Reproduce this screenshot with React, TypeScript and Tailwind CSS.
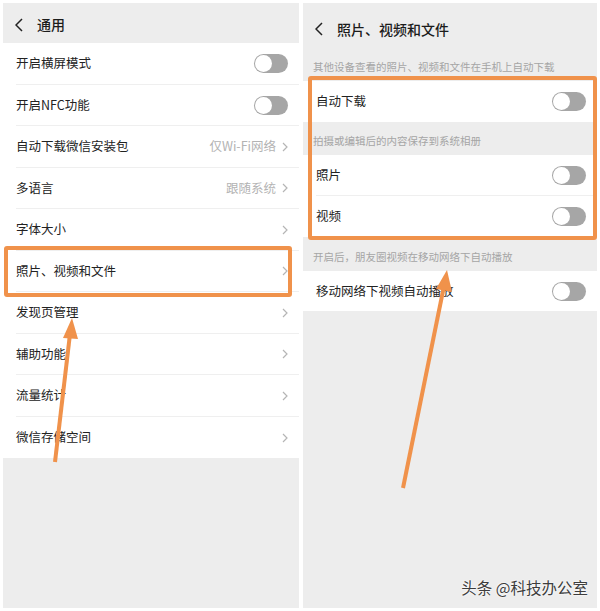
import React from "react"

const FONT = "font-['Noto_Sans_CJK_SC','Noto_Sans',sans-serif]"

type Row = {
  label: string
  toggle?: boolean
  value?: string
  arrow?: boolean
}

const generalRows: Row[] = [
  { label: "开启横屏模式", toggle: true },
  { label: "开启NFC功能", toggle: true },
  { label: "自动下载微信安装包", value: "仅Wi-Fi网络", arrow: true },
  { label: "多语言", value: "跟随系统", arrow: true },
  { label: "字体大小", arrow: true },
  { label: "照片、视频和文件", arrow: true },
  { label: "发现页管理", arrow: true },
  { label: "辅助功能", arrow: true },
  { label: "流量统计", arrow: true },
  { label: "微信存储空间", arrow: true },
]

function Toggle() {
  return (
    <div className="w-[34px] h-[19px] rounded-full bg-[#a6a6a6] p-[1px] flex items-center">
      <div className="w-[17px] h-[17px] rounded-full bg-white" />
    </div>
  )
}

function Chevron() {
  return (
    <svg width="6" height="10" viewBox="0 0 6 10" className="ml-[6px]">
      <polyline points="1,1 5,5 1,9" fill="none" stroke="#b5b5b5" strokeWidth="1.2" />
    </svg>
  )
}

function BackIcon() {
  return (
    <svg width="8" height="14" viewBox="0 0 8 14">
      <polyline points="7,1 1,7 7,13" fill="none" stroke="#222" strokeWidth="1.5" />
    </svg>
  )
}

function SettingRow({ row, last, height }: { row: Row; last?: boolean; height: string }) {
  return (
    <div className={`bg-white pl-[13px] ${height}`}>
      <div
        className={`h-full flex items-center pr-[11px] ${last ? "" : "border-b border-[#efefef]"}`}
      >
        <span className="flex-1 text-[12.5px] text-[#222]">{row.label}</span>
        {row.value && <span className="text-[12.5px] text-[#b3b3b3]">{row.value}</span>}
        {row.arrow && <Chevron />}
        {row.toggle && <Toggle />}
      </div>
    </div>
  )
}

function SectionLabel({ text, height }: { text: string; height: string }) {
  return (
    <div className={`${height} flex items-end pl-[10px] pb-[6px]`}>
      <span className="text-[10.5px] text-[#a5a5a5]">{text}</span>
    </div>
  )
}

export default function App() {
  return (
    <div className={`relative w-[600px] h-[611px] bg-white flex gap-[4px] pl-[3px] pt-[3px] ${FONT}`}>
      {/* left phone: 通用 */}
      <div className="w-[296px] h-[605px] bg-[#ededed] flex flex-col">
        <div className="h-[40px] flex items-center pl-[12px] pt-[3px] gap-[14px]">
          <BackIcon />
          <span className="text-[14px] font-medium text-[#1c1c1c]">通用</span>
        </div>
        <div className="flex flex-col">
          {generalRows.map((row, i) => (
            <SettingRow
              key={row.label}
              row={row}
              last={i === generalRows.length - 1}
              height={i % 2 === 0 ? "h-[42px]" : "h-[41px]"}
            />
          ))}
        </div>
      </div>

      {/* right phone: 照片、视频和文件 */}
      <div className="w-[294px] h-[605px] bg-[#ededed] flex flex-col">
        <div className="h-[52px] flex items-center pl-[12px] gap-[14px]">
          <BackIcon />
          <span className="text-[14px] font-medium text-[#1c1c1c]">照片、视频和文件</span>
        </div>
        <SectionLabel text="其他设备查看的照片、视频和文件在手机上自动下载" height="h-[26px]" />
        <SettingRow row={{ label: "自动下载", toggle: true }} last height="h-[41px]" />
        <SectionLabel text="拍摄或编辑后的内容保存到系统相册" height="h-[33px]" />
        <SettingRow row={{ label: "照片", toggle: true }} height="h-[41px]" />
        <SettingRow row={{ label: "视频", toggle: true }} last height="h-[41px]" />
        <SectionLabel text="开启后，朋友圈视频在移动网络下自动播放" height="h-[34px]" />
        <SettingRow row={{ label: "移动网络下视频自动播放", toggle: true }} last height="h-[40px]" />
      </div>

      {/* annotation boxes */}
      <div className="absolute left-[4px] top-[246px] w-[288px] h-[51px] border-[4px] border-[#f0924b] rounded-[3px]" />
      <div className="absolute left-[308px] top-[76px] w-[289px] h-[164px] border-[4px] border-[#f0924b] rounded-[3px]" />

      {/* annotation arrows */}
      <svg className="absolute left-0 top-0 pointer-events-none" width="600" height="611">
        <line x1="55" y1="462" x2="70" y2="334" stroke="#f0924b" strokeWidth="4" />
        <polygon points="72,318 63,338 78,339" fill="#f0924b" />
        <line x1="403" y1="488" x2="444" y2="286" stroke="#f0924b" strokeWidth="4" />
        <polygon points="447,270 436,289 452,292" fill="#f0924b" />
      </svg>

      {/* watermark */}
      <div className="absolute right-[12px] bottom-[12px] text-[15.5px] text-[#3d3d3d] [text-shadow:0_0_2px_#fff,0_0_2px_#fff]">
        头条 @科技办公室
      </div>
    </div>
  )
}
